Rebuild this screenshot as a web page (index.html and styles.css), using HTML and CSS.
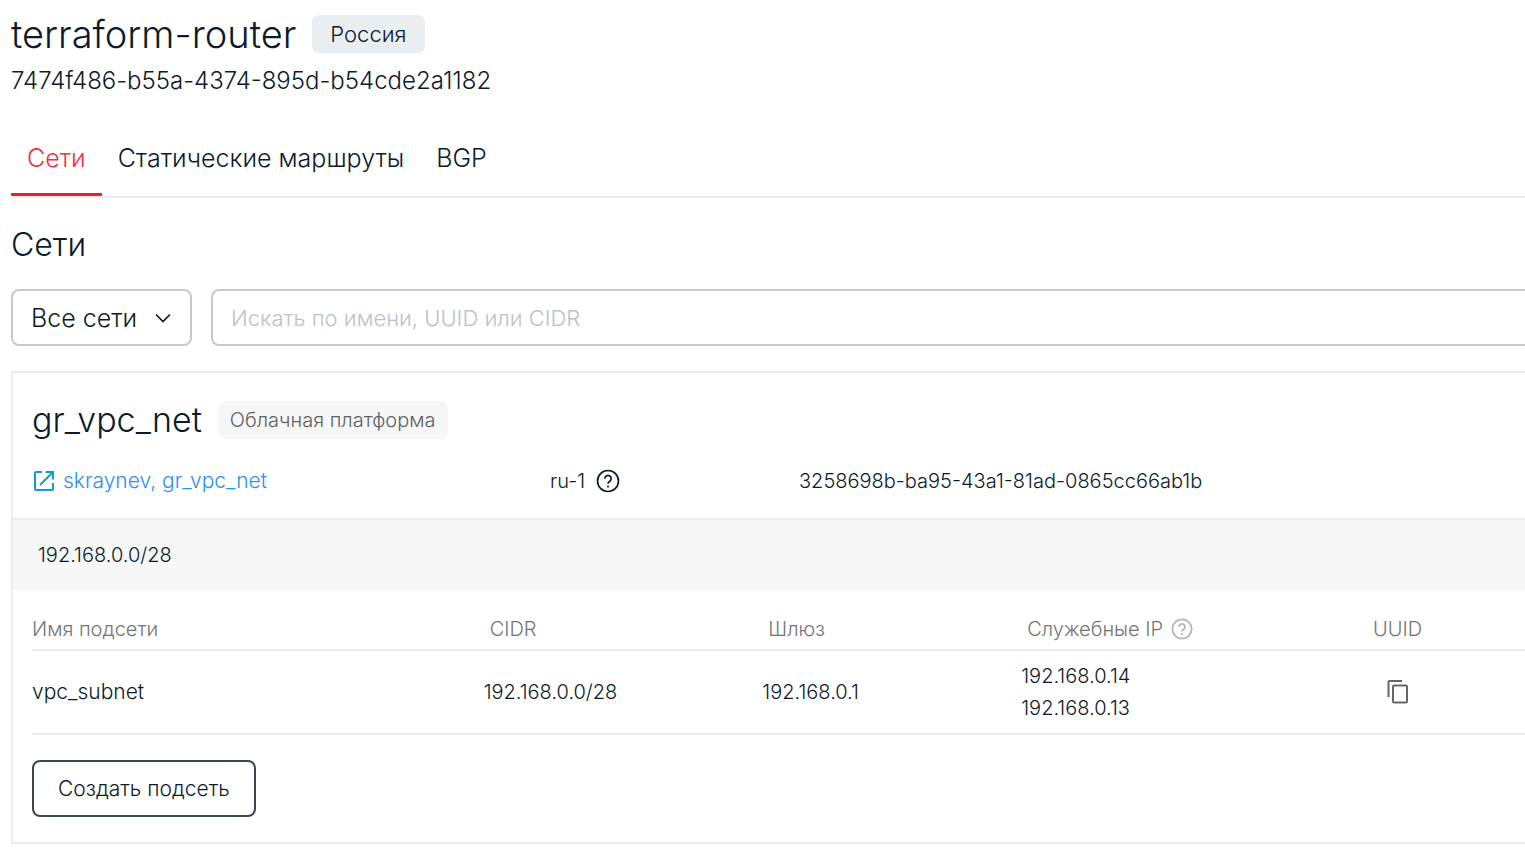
FILE: index.html
```html
<!DOCTYPE html>
<html lang="ru">
<head>
<meta charset="utf-8">
<meta name="viewport" content="width=device-width, initial-scale=1">
<title>terraform-router</title>
<link rel="stylesheet" href="styles.css">
</head>
<body>
<main class="page">
  <header class="router">
    <div class="router-heading">
      <h1 class="router-name">terraform-router</h1>
      <span class="badge badge-region">Россия</span>
    </div>
    <p class="router-id">7474f486-b55a-4374-895d-b54cde2a1182</p>
  </header>

  <nav class="tabs">
    <a class="tab tab-active" href="#networks" aria-current="page">Сети</a>
    <a class="tab" href="#routes">Статические маршруты</a>
    <a class="tab" href="#bgp">BGP</a>
  </nav>

  <h2 class="section-title" id="networks">Сети</h2>

  <form class="filters">
    <div class="select-wrap">
      <select class="select" aria-label="Сети">
        <option>Все сети</option>
      </select>
      <svg class="chevron" viewBox="0 0 16 16" aria-hidden="true"><path d="M1 4.500 8 11.500 15 4.500"/></svg>
    </div>
    <input class="search" type="text" aria-label="Поиск" placeholder="Искать по имени, UUID или CIDR">
  </form>

  <section class="card">
    <div class="card-head">
      <div class="network-heading">
        <h3 class="network-name">gr_vpc_net</h3>
        <span class="badge badge-platform">Облачная платформа</span>
      </div>
      <div class="network-info">
        <a class="project-link" href="#project">
          <svg class="icon-open" viewBox="0 0 20 20" aria-hidden="true"><path d="M8 1H2a1 1 0 0 0-1 1v16a1 1 0 0 0 1 1h16a1 1 0 0 0 1-1v-6M11.500 1H19v7.500M19 1 6 14"/></svg>
          <span>skraynev, gr_vpc_net</span>
        </a>
        <div class="region">
          <span>ru-1</span>
          <button class="help" type="button" aria-label="Справка о регионе">
            <svg class="icon-help" viewBox="0 0 24 24" aria-hidden="true"><circle cx="12" cy="12" r="10.500"/><path d="M8.800 9.700a3.200 3.200 0 1 1 5.100 2.500c-1.200.9-1.900 1.400-1.900 2.600M12 16.600v1.900"/></svg>
          </button>
        </div>
        <span>3258698b-ba95-43a1-81ad-0865cc66ab1b</span>
      </div>
    </div>

    <div class="cidr-bar">192.168.0.0/28</div>

    <div class="card-body">
      <table class="subnets">
        <colgroup>
          <col class="col-name"><col class="col-cidr"><col class="col-gateway"><col class="col-service"><col>
        </colgroup>
        <thead>
          <tr>
            <th scope="col">Имя подсети</th>
            <th scope="col">CIDR</th>
            <th scope="col">Шлюз</th>
            <th scope="col">
              <span class="th-with-help">Служебные IP
                <button class="help help-muted" type="button" aria-label="Справка о служебных IP">
                  <svg class="icon-help" viewBox="0 0 24 24" aria-hidden="true"><circle cx="12" cy="12" r="10.500"/><path d="M8.800 9.700a3.200 3.200 0 1 1 5.100 2.500c-1.200.9-1.900 1.400-1.900 2.600M12 16.600v1.900"/></svg>
                </button>
              </span>
            </th>
            <th scope="col">UUID</th>
          </tr>
        </thead>
        <tbody>
          <tr>
            <td class="cell-name">vpc_subnet</td>
            <td>192.168.0.0/28</td>
            <td>192.168.0.1</td>
            <td>192.168.0.14<br>192.168.0.13</td>
            <td class="cell-copy">
              <button class="copy" type="button" aria-label="Скопировать UUID">
                <svg class="icon-copy" viewBox="0 0 22 24" aria-hidden="true"><path d="M1.500 17V2a1 1 0 0 1 1-1H15"/><rect x="6" y="5.500" width="14" height="17" rx="1"/></svg>
              </button>
            </td>
          </tr>
        </tbody>
      </table>
      <button class="create" type="button">Создать подсеть</button>
    </div>
  </section>
</main>
</body>
</html>
```
FILE: styles.css
```css
* {
  box-sizing: border-box;
}

body {
  margin: 0;
  background: #fff;
  color: #0b1b2b;
  font-family: Inter, "Liberation Sans", sans-serif;
  font-size: 20px;
  font-weight: 300;
  line-height: 32px;
}

h1, h2, h3, p {
  margin: 0;
  font-weight: 300;
}

a {
  color: inherit;
  text-decoration: none;
}

button, input, select {
  font: inherit;
  color: inherit;
}

svg {
  display: block;
  flex: none;
  fill: none;
  stroke: currentColor;
}

.page {
  padding: 12px 0 16px 11px;
}

.router-heading,
.network-heading {
  display: flex;
  align-items: center;
  gap: 16px;
}

.router-name {
  font-size: 38px;
  line-height: 44px;
}

.badge {
  height: 38px;
  line-height: 38px;
  border-radius: 6px;
}

.badge-region {
  padding: 0 18px;
  background: #eaeef1;
  font-size: 22px;
}

.badge-platform {
  padding: 0 12px;
  border-radius: 8px;
  background: #f7f7f7;
  color: #5f6163;
}

.router-id {
  margin-top: 9px;
  font-size: 24px;
}

.tabs {
  display: flex;
  margin-top: 31px;
  border-bottom: 2px solid #eaeef1;
  font-size: 25px;
}

.tab {
  padding: 14px 16px 19px;
  border-bottom: 3px solid transparent;
}

.tab-active {
  border-color: #ee1c2e;
  border-radius: 1px;
  color: #f0323f;
}

.section-title {
  margin-top: 27px;
  font-size: 32px;
  line-height: 40px;
}

.filters {
  display: flex;
  gap: 19px;
  margin-top: 24px;
}

.select-wrap {
  display: grid;
  flex: none;
  align-items: center;
}

.select,
.chevron {
  grid-area: 1 / 1;
}

.select,
.search {
  height: 57px;
  border: 2px solid #c4cacf;
  border-radius: 8px;
  background: #fff;
}

.select {
  width: 181px;
  padding: 0 18px;
  font-size: 25px;
  appearance: none;
}

.chevron {
  justify-self: end;
  width: 16px;
  height: 16px;
  margin-right: 21px;
  stroke-width: 1.7;
  pointer-events: none;
}

.search {
  flex: 1;
  min-width: 0;
  padding: 0 18px;
  border-right: 0;
  border-radius: 8px 0 0 8px;
  font-size: 22px;
}

.search::placeholder {
  color: #bac2c9;
  opacity: 1;
}

.card {
  margin-top: 25px;
  border: 2px solid #ececec;
  border-right: 0;
}

.card-head {
  padding: 27px 0 21px 19px;
}

.network-name {
  font-size: 34px;
  line-height: 40px;
}

.network-info {
  display: grid;
  grid-template-columns: 518fr 249fr 726fr;
  align-items: center;
  margin-top: 25px;
}

.project-link {
  display: flex;
  align-items: center;
  gap: 9px;
  padding-left: 2px;
  color: #2b8ff5;
  font-size: 21px;
}

.icon-open {
  width: 20px;
  height: 20px;
  color: #149bd1;
  stroke-width: 2;
}

.region,
.th-with-help {
  display: flex;
  align-items: center;
  gap: 8px;
}

.region {
  gap: 11px;
}

.help,
.copy {
  display: block;
  padding: 0;
  border: 0;
  background: none;
}

.help-muted {
  color: #b5b5b5;
}

.icon-help {
  width: 24px;
  height: 24px;
  stroke-width: 1.7;
}

.help-muted .icon-help {
  width: 22px;
  height: 22px;
  stroke-width: 2;
}

.cidr-bar {
  padding: 19px 25px;
  border-top: 2px solid #ececec;
  background: #f7f7f7;
}

.card-body {
  padding: 23px 0 25px 19px;
}

.subnets {
  width: 100%;
  table-layout: fixed;
  border-collapse: collapse;
}

.col-name {
  width: 30.25%;
}

.col-cidr {
  width: 18.67%;
}

.col-gateway {
  width: 17.34%;
}

.col-service {
  width: 23.16%;
}

.subnets th,
.subnets td {
  padding: 0;
  border-bottom: 2px solid #ececec;
  text-align: left;
}

.subnets th {
  padding: 0 0 4px 6px;
  color: #747474;
  font-weight: 300;
}

.subnets th:first-child {
  padding-left: 0;
}

.subnets td {
  padding: 9px 0;
}

.subnets .cell-name {
  font-size: 21px;
}

.subnets .cell-copy {
  padding-left: 20px;
}

.icon-copy {
  width: 22px;
  height: 24px;
  color: #666;
  stroke-width: 2;
}

.create {
  height: 57px;
  margin-top: 25px;
  padding: 0 24px;
  border: 2px solid #3b4650;
  border-radius: 8px;
  background: #fff;
  font-size: 21px;
}
```
